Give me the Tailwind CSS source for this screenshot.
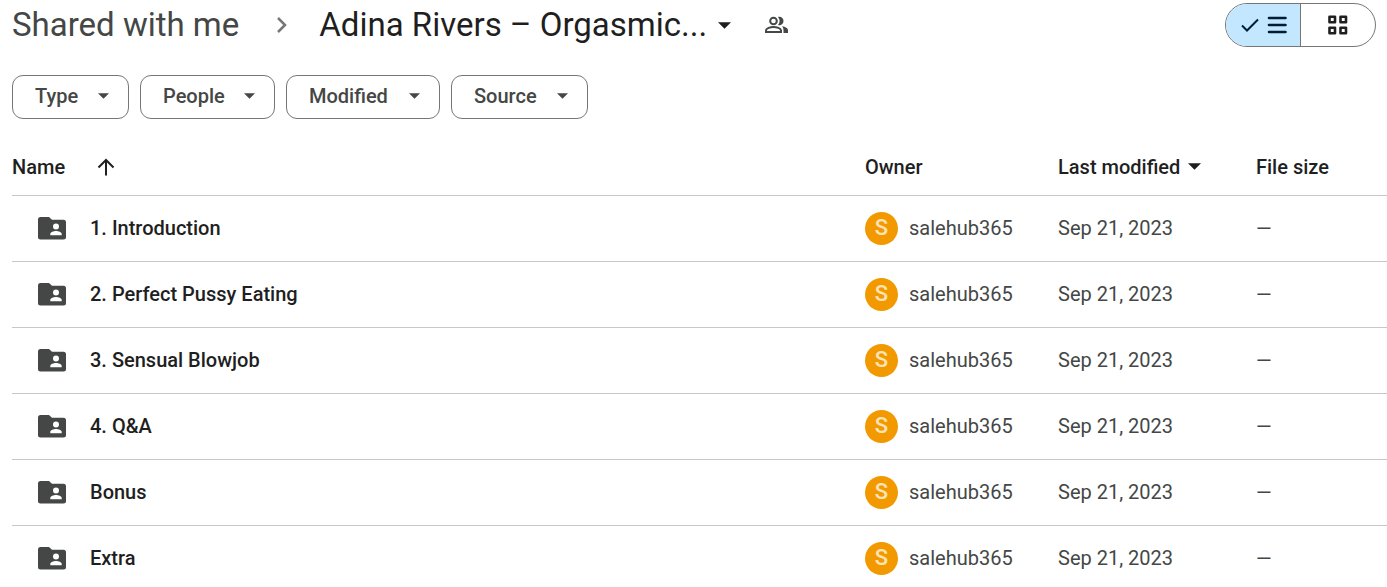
<!DOCTYPE html>
<html lang="en">
<head>
    <meta charset="UTF-8">
    <meta name="viewport" content="width=device-width, initial-scale=1.0">
    <title>Shared with me</title>
    <script src="https://cdn.jsdelivr.net/npm/@tailwindcss/browser@4"></script>
</head>
<body class="h-screen overflow-hidden bg-white font-['Roboto',sans-serif] text-[#1f1f1f]">

    <!-- Shared icons -->
    <svg class="hidden">
        <symbol id="caret" viewBox="0 0 12 6"><path d="M0 0h12L6 6z" /></symbol>
        <symbol id="folder" viewBox="0 0 28 23">
            <path fill-rule="evenodd" d="M2.500 0H11l3 2.800h11.500A2.500 2.500 0 0 1 28 5.300v14.700a2.500 2.500 0 0 1-2.500 2.500h-23A2.500 2.500 0 0 1 0 20V2.500A2.500 2.500 0 0 1 2.500 0zM18 6.500a3 3 0 1 0 0 6 3 3 0 0 0 0-6zM12.300 18.300h11.400v-1.300c0-1.800-3.200-2.900-5.700-2.900s-5.700 1.100-5.700 2.900z" />
        </symbol>
    </svg>

    <!-- Breadcrumb and view switch -->
    <header class="flex items-center justify-between pl-3 pr-[11px] pt-[3px]">
        <nav class="flex items-center h-11 text-[33px] leading-11">
            <a href="#" class="text-[#444746]">Shared with me</a>
            <svg class="w-3 h-4 ml-9 mr-8 fill-none stroke-[#747775] stroke-[2.5]" viewBox="0 0 12 16"><path d="M3 1l7 7-7 7" /></svg>
            <button type="button" class="flex items-center gap-[11px]">
                Adina Rivers – Orgasmic...
                <svg class="w-[13px] h-[7px] fill-current"><use href="#caret" /></svg>
            </button>
            <button type="button" aria-label="Shared" class="ml-[33px]">
                <svg class="w-6 h-[18px] fill-none stroke-[#444746] stroke-2" viewBox="0 0 24 18">
                    <circle cx="9.500" cy="5" r="3.300" />
                    <path d="M2 16v-1.600c0-2.200 4.500-3.400 7.500-3.400s7.500 1.200 7.500 3.400V16z" />
                    <path class="fill-[#444746] stroke-none" d="M14 1c2.900-.8 5.500 1 5.500 4s-2.600 4.800-5.500 4c2.200-2.400 2.200-5.600 0-8zM18 10.300c3.500.5 6 1.800 6 4.100V17h-4.500v-2.600c0-1.700-.6-3.100-1.500-4.100z" />
                </svg>
            </button>
        </nav>
        <div class="flex h-11 w-[151px] overflow-hidden rounded-full border border-[#747775]">
            <button type="button" aria-label="List layout" aria-pressed="true" class="flex w-[75px] items-center justify-center gap-2 border-r border-[#747775] bg-[#c2e7ff]">
                <svg class="w-[19px] h-[14px] fill-none stroke-[#001d35] stroke-2" viewBox="0 0 19 14"><path d="M2 7.500l5 5L18 1.500" /></svg>
                <svg class="w-5 h-[18px] fill-none stroke-[#001d35] stroke-[2.6]" stroke-linecap="round" viewBox="0 0 20 18"><path d="M2 2h16.500M2 9h16.500M2 16h16.500" /></svg>
            </button>
            <button type="button" aria-label="Grid layout" aria-pressed="false" class="flex flex-1 items-center justify-center">
                <svg class="w-5 h-5 fill-none stroke-current stroke-[2.6]" stroke-linejoin="round" viewBox="0 0 20 20"><path d="M1.500 1.800h5.500v5.500H1.500zM12.500 1.800h5.500v5.500h-5.500zM1.500 12.800h5.500v5.500H1.500zM12.500 12.800h5.500v5.500h-5.500z" /></svg>
            </button>
        </div>
    </header>

    <!-- Filters -->
    <div class="mt-7 flex gap-[11px] pl-3 text-xl font-medium text-[#444746]">
        <button type="button" class="flex h-11 w-[117px] items-center justify-between rounded-[11px] border border-[#747775] pl-[22px] pr-[19px] pb-0.5">
            Type <svg class="w-[11px] h-[6px] fill-current"><use href="#caret" /></svg>
        </button>
        <button type="button" class="flex h-11 w-[135px] items-center justify-between rounded-[11px] border border-[#747775] pl-[22px] pr-[19px] pb-0.5">
            People <svg class="w-[11px] h-[6px] fill-current"><use href="#caret" /></svg>
        </button>
        <button type="button" class="flex h-11 w-[154px] items-center justify-between rounded-[11px] border border-[#747775] pl-[22px] pr-[19px] pb-0.5">
            Modified <svg class="w-[11px] h-[6px] fill-current"><use href="#caret" /></svg>
        </button>
        <button type="button" class="flex h-11 w-[137px] items-center justify-between rounded-[11px] border border-[#747775] pl-[22px] pr-[19px] pb-0.5">
            Source <svg class="w-[11px] h-[6px] fill-current"><use href="#caret" /></svg>
        </button>
    </div>

    <!-- File list -->
    <div class="mt-[21px] pl-3">
        <table class="w-full table-fixed border-separate border-spacing-0 text-left text-xl">
            <colgroup>
                <col>
                <col class="w-[193px]">
                <col class="w-[198px]">
                <col class="w-[131px]">
            </colgroup>
            <thead>
                <tr class="h-14 *:border-b *:border-[#c7c7c7] *:pb-0.5 *:font-medium">
                    <th scope="col">
                        <button type="button" class="flex items-center gap-8">
                            Name
                            <svg class="w-[18px] h-[18px] fill-none stroke-current stroke-2" viewBox="0 0 18 18"><path d="M9 17.500V2M1.500 9.500L9 2l7.500 7.500" /></svg>
                        </button>
                    </th>
                    <th scope="col">Owner</th>
                    <th scope="col">
                        <button type="button" class="flex items-center gap-2">
                            Last modified
                            <svg class="w-[13px] h-[7px] fill-current"><use href="#caret" /></svg>
                        </button>
                    </th>
                    <th scope="col">File size</th>
                </tr>
            </thead>
            <tbody id="files" class="text-[#444746]"></tbody>
        </table>
    </div>

    <script>
        const folders = [
            '1. Introduction',
            '2. Perfect Pussy Eating',
            '3. Sensual Blowjob',
            '4. Q&amp;A',
            'Bonus',
            'Extra'
        ];

        document.getElementById('files').innerHTML = folders.map(name => `
            <tr class="h-[66px] *:border-b *:border-[#c7c7c7]">
                <td>
                    <div class="flex items-center gap-6 pl-[26px] font-medium text-[#1f1f1f]">
                        <svg class="w-7 h-[23px] fill-[#444746]"><use href="#folder" /></svg>
                        <span class="pb-0.5">${name}</span>
                    </div>
                </td>
                <td>
                    <div class="flex items-center gap-[11px]">
                        <span class="flex h-[33px] w-[33px] items-center justify-center rounded-full bg-[#f29900] text-[22px] font-medium text-[#fde3b5]">S</span>
                        <span class="pb-0.5">salehub365</span>
                    </div>
                </td>
                <td class="pb-0.5">Sep 21, 2023</td>
                <td>—</td>
            </tr>`).join('');
    </script>

</body>
</html>
